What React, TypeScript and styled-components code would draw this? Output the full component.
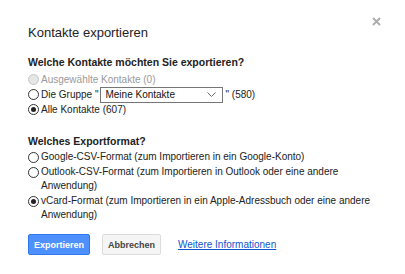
import React from "react";
import styled, { createGlobalStyle } from "styled-components";

const GlobalStyle = createGlobalStyle`
  html, body { margin: 0; padding: 0; background: #fff; }
  body { font-family: "Liberation Sans", Arial, sans-serif; color: #222; }
`;

const Dialog = styled.div`
  position: relative;
  width: 405px;
  height: 274px;
  box-sizing: border-box;
  padding: 25px 28px 0 28px;
  background: #fff;
`;

const Close = styled.div`
  position: absolute;
  top: 12px;
  right: 24px;
  width: 9px;
  height: 9px;
  opacity: 0.4;
`;

const Title = styled.h1`
  margin: 0;
  font-size: 13px;
  line-height: 16px;
  font-weight: normal;
  color: #222;
`;

const Section = styled.div<{ $top: number; $gap: number }>`
  margin-top: ${(p) => p.$top}px;
  display: flex;
  flex-direction: column;
  gap: ${(p) => p.$gap}px;
`;

const Heading = styled.div<{ $mb: number }>`
  font-size: 10.5px;
  font-weight: bold;
  line-height: 14px;
  color: #222;
  margin-bottom: ${(p) => p.$mb}px;
`;

const Option = styled.label<{ $disabled?: boolean; $lh: number }>`
  display: flex;
  align-items: flex-start;
  font-size: 10px;
  line-height: ${(p) => p.$lh}px;
  color: ${(p) => (p.$disabled ? "#999" : "#222")};
`;

const OptionText = styled.span`
  display: block;
`;

const Radio = styled.span<{ $checked?: boolean; $disabled?: boolean; $top: number }>`
  position: relative;
  flex: none;
  width: 11px;
  height: 11px;
  box-sizing: border-box;
  border-radius: 50%;
  margin: ${(p) => p.$top}px 2px 0 0;
  border: 1px solid ${(p) => (p.$disabled ? "#c6c6c6" : "#333")};
  background: ${(p) => (p.$disabled ? "#e6e6e6" : "#fff")};
  &::after {
    content: "";
    display: ${(p) => (p.$checked ? "block" : "none")};
    position: absolute;
    left: 2px;
    top: 2px;
    width: 5px;
    height: 5px;
    border-radius: 50%;
    background: #222;
  }
`;

const Inline = styled.span`
  display: flex;
  align-items: center;
  height: 15px;
`;

const Select = styled.span`
  display: inline-flex;
  align-items: center;
  justify-content: space-between;
  box-sizing: border-box;
  flex: none;
  width: 123px;
  height: 16px;
  margin: 0 2px;
  padding: 0 6px 0 4px;
  border: 1px solid #767676;
  background: #fff;
  font-size: 10px;
  color: #111;
`;

const Buttons = styled.div`
  display: flex;
  align-items: center;
  margin-top: 12px;
`;

const Button = styled.button<{ $primary?: boolean }>`
  box-sizing: border-box;
  height: 21px;
  padding: 0 5px;
  margin-right: 12px;
  border-radius: 2px;
  font-family: "Liberation Sans", Arial, sans-serif;
  font-size: 9px;
  font-weight: bold;
  border: 1px solid ${(p) => (p.$primary ? "#3079ed" : "#dcdcdc")};
  background: ${(p) => (p.$primary ? "#4d90fe" : "#f5f5f5")};
  color: ${(p) => (p.$primary ? "#fff" : "#444")};
`;

const Link = styled.a`
  margin-left: 5px;
  font-size: 10px;
  color: #15c;
  text-decoration: underline;
`;

export default function App() {
  return (
    <>
      <GlobalStyle />
      <Dialog>
        <Close>
          <svg width="9" height="9" viewBox="0 0 9 9">
            <path d="M1 1L8 8M8 1L1 8" stroke="#333" strokeWidth="1.8" />
          </svg>
        </Close>
        <Title>Kontakte exportieren</Title>
        <Section $top={14} $gap={0}>
          <Heading $mb={3}>Welche Kontakte möchten Sie exportieren?</Heading>
          <Option $disabled $lh={15}>
            <Radio $disabled $top={2} />
            <OptionText>Ausgewählte Kontakte (0)</OptionText>
          </Option>
          <Option $lh={15}>
            <Radio $top={2} />
            <Inline>
              Die Gruppe "
              <Select>
                Meine Kontakte
                <svg width="9" height="5" viewBox="0 0 9 5">
                  <path d="M0.5 0.5L4.5 4.5L8.5 0.5" stroke="#666" fill="none" />
                </svg>
              </Select>
              " (580)
            </Inline>
          </Option>
          <Option $lh={15}>
            <Radio $checked $top={2} />
            <OptionText>Alle Kontakte (607)</OptionText>
          </Option>
        </Section>
        <Section $top={17} $gap={1}>
          <Heading $mb={1}>Welches Exportformat?</Heading>
          <Option $lh={14}>
            <Radio $top={1.5} />
            <OptionText>Google-CSV-Format (zum Importieren in ein Google-Konto)</OptionText>
          </Option>
          <Option $lh={14}>
            <Radio $top={1.5} />
            <OptionText>Outlook-CSV-Format (zum Importieren in Outlook oder eine andere Anwendung)</OptionText>
          </Option>
          <Option $lh={14}>
            <Radio $checked $top={1.5} />
            <OptionText>vCard-Format (zum Importieren in ein Apple-Adressbuch oder eine andere Anwendung)</OptionText>
          </Option>
        </Section>
        <Buttons>
          <Button $primary>Exportieren</Button>
          <Button>Abbrechen</Button>
          <Link href="#">Weitere Informationen</Link>
        </Buttons>
      </Dialog>
    </>
  );
}
